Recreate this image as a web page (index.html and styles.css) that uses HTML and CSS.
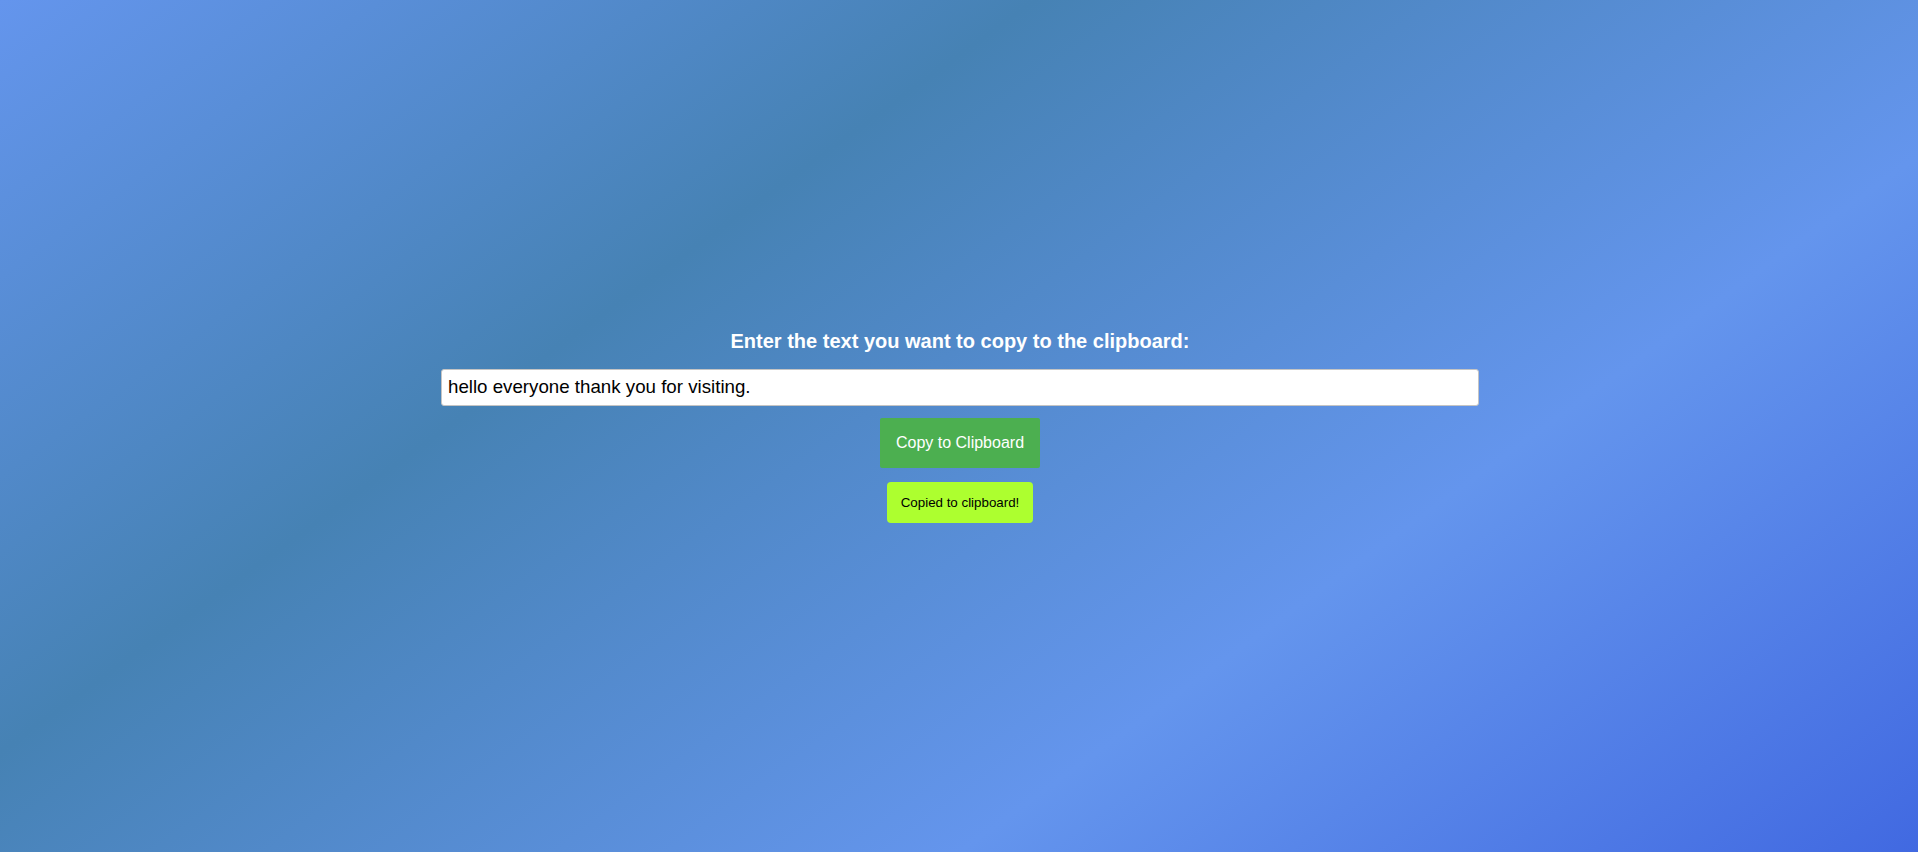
FILE: index.html
```html
<!DOCTYPE html>
<html lang="en">
<head>
<meta charset="utf-8">
<title>Copy to Clipboard</title>
<link rel="stylesheet" href="styles.css">
</head>
<body>
  <main class="page">
    <h3 class="prompt">Enter the text you want to copy to the clipboard:</h3>
    <input class="text-input" type="text" value="hello everyone thank you for visiting.">
    <button class="copy-btn" type="button">Copy to Clipboard</button>
    <div class="toast">Copied to clipboard!</div>
  </main>
</body>
</html>
```

FILE: styles.css
```css
html, body {
  margin: 0;
  padding: 0;
  height: 100%;
}

body {
  font-family: "Liberation Sans", Arial, sans-serif;
  background: linear-gradient(144deg, #6495ed 0%, #4682b4 33.5%, #6495ed 69%, #4169e1 100%);
  background-attachment: fixed;
}

.page {
  box-sizing: border-box;
  height: 100vh;
  padding-left: 2px;
  display: flex;
  flex-direction: column;
  align-items: center;
  justify-content: center;
}

.prompt {
  margin: 0 0 16px;
  font-size: 20px;
  line-height: 23px;
  font-weight: bold;
  color: #ffffff;
}

.text-input {
  box-sizing: border-box;
  width: 1038px;
  height: 37px;
  margin: 0;
  padding: 7px 6px;
  border: 1px solid #c4c4c4;
  border-radius: 3px;
  background: #ffffff;
  color: #000000;
  font-family: "Liberation Sans", Arial, sans-serif;
  font-size: 18.72px;
  outline: none;
}

.copy-btn {
  margin: 12px 0 0;
  padding: 16px;
  border: none;
  border-radius: 2px;
  background: #4caf50;
  color: #ffffff;
  font-family: "Liberation Sans", Arial, sans-serif;
  font-size: 16px;
  line-height: 18px;
  cursor: pointer;
}

.toast {
  margin-top: 14px;
  padding: 13px 14px;
  border-radius: 4px;
  background: #adff2f;
  color: #000000;
  font-size: 13.33px;
  line-height: 15px;
}
```
